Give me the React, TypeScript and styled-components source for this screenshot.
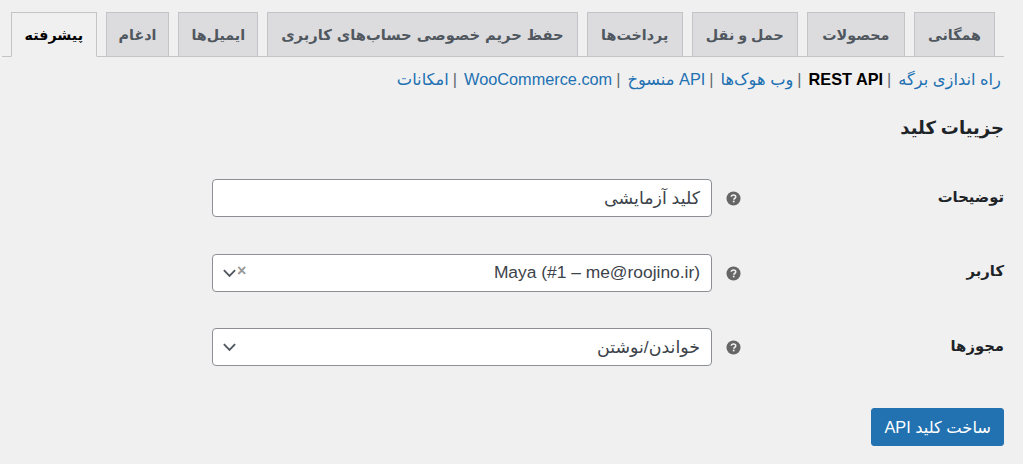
import React from 'react';
import styled, { createGlobalStyle } from 'styled-components';

const GlobalStyle = createGlobalStyle`
  html, body {
    margin: 0;
    height: 100%;
    background: #f0f0f1;
  }
  body {
    font-family: "Liberation Sans", "DejaVu Sans", sans-serif;
    font-size: 14px;
    color: #3c434a;
  }
`;

const tabs = [
  { label: 'همگانی', pad: 13 },
  { label: 'محصولات', pad: 14.5 },
  { label: 'حمل و نقل', pad: 13 },
  { label: 'پرداخت‌ها', pad: 13.5 },
  { label: 'حفظ حریم خصوصی حساب‌های کاربری', pad: 13, spread: true },
  { label: 'ایمیل‌ها', pad: 12 },
  { label: 'ادغام', pad: 12 },
  { label: 'پیشرفته', pad: 12.5, active: true },
];

const subLinks = [
  { label: 'راه اندازی برگه' },
  { label: 'REST API', current: true },
  { label: 'وب هوک‌ها' },
  { label: 'API منسوخ' },
  { label: 'WooCommerce.com' },
  { label: 'امکانات' },
];

const HelpIcon = () => (
  <HelpSvg viewBox="0 0 16 16" aria-hidden="true">
    <circle cx="8" cy="8" r="7.5" fill="#666" />
    <path
      d="M5.6 6.2C5.7 4.9 6.7 4.2 8 4.2c1.4 0 2.4.8 2.4 2 0 1-.6 1.4-1.2 1.8-.6.4-.8.6-.8 1.3"
      fill="none"
      stroke="#f0f0f1"
      strokeWidth="1.7"
    />
    <rect x="7.3" y="10.3" width="1.8" height="1.8" fill="#f0f0f1" />
  </HelpSvg>
);

const Chevron = () => (
  <ChevronSvg viewBox="0 0 16 10" aria-hidden="true">
    <path d="M2 2l6 6 6-6" fill="none" stroke="#50575e" strokeWidth="2" />
  </ChevronSvg>
);

const App = () => {
  return (
    <Page dir="rtl">
      <GlobalStyle />
      <TabBar>
        {tabs.map((tab) => (
          <Tab key={tab.label} $active={tab.active} $pad={tab.pad} $spread={tab.spread}>{tab.label}</Tab>
        ))}
      </TabBar>

      <SubNav>
        {subLinks.map((link, i) => (
          <SubItem key={link.label}>
            {link.current ? <Current>{link.label}</Current> : <SubLink href="#">{link.label}</SubLink>}
            {i < subLinks.length - 1 && <Sep>|</Sep>}
          </SubItem>
        ))}
      </SubNav>

      <Heading>جزییات کلید</Heading>

      <Form>
        <Row>
          <Label>توضیحات</Label>
          <HelpCell><HelpIcon /></HelpCell>
          <Field>
            <FieldText>کلید آزمایشی</FieldText>
          </Field>
        </Row>
        <Row>
          <Label>کاربر</Label>
          <HelpCell><HelpIcon /></HelpCell>
          <Field>
            <FieldText dir="ltr">Maya (#1 – me@roojino.ir)</FieldText>
            <Controls>
              <Clear>×</Clear>
              <Chevron />
            </Controls>
          </Field>
        </Row>
        <Row>
          <Label>مجوزها</Label>
          <HelpCell><HelpIcon /></HelpCell>
          <Field>
            <FieldText>خواندن/نوشتن</FieldText>
            <Controls>
              <Chevron />
            </Controls>
          </Field>
        </Row>
      </Form>

      <Actions>
        <PrimaryButton>ساخت کلید API</PrimaryButton>
      </Actions>
    </Page>
  );
};

const Page = styled.div`
  width: 1023px;
  height: 464px;
  box-sizing: border-box;
  padding: 12px 19px 0 2px;
  overflow: hidden;
`;

const TabBar = styled.nav`
  display: flex;
  gap: 9px;
  height: 44px;
  padding: 0 9px 0 8px;
  border-bottom: 1px solid #c3c4c7;
`;

const Tab = styled.a<{ $active?: boolean; $pad: number; $spread?: boolean }>`
  box-sizing: border-box;
  height: 45px;
  display: flex;
  align-items: center;
  padding: 0 ${(p) => p.$pad}px;
  border: 1px solid #c3c4c7;
  border-bottom-color: ${(p) => (p.$active ? '#f0f0f1' : '#c3c4c7')};
  background: ${(p) => (p.$active ? '#f0f0f1' : '#dcdcde')};
  color: ${(p) => (p.$active ? '#000' : '#50575e')};
  font-size: ${(p) => (p.$spread ? '14.7px' : '14.3px')};
  font-weight: 600;
  white-space: nowrap;
  word-spacing: ${(p) => (p.$spread ? '0.9px' : '0')};
`;

const SubNav = styled.div`
  display: flex;
  margin-top: 12px;
  padding-right: 3px;
  line-height: 20px;
  font-size: 16.3px;
`;

const SubItem = styled.span`
  white-space: nowrap;
`;

const SubLink = styled.a`
  color: #2271b1;
  text-decoration: none;
`;

const Current = styled.strong`
  color: #000;
  font-weight: 600;
`;

const Sep = styled.span`
  color: #646970;
  margin-inline: 7px 4px;
`;

const Heading = styled.h2`
  margin: 27px 0 0;
  font-size: 18px;
  line-height: 24px;
  font-weight: 600;
  color: #1d2327;
`;

const Form = styled.div`
  display: flex;
  flex-direction: column;
  gap: 36.5px;
  margin-top: 39px;
`;

const Row = styled.div`
  display: grid;
  grid-template-columns: 263px 29px 500px;
  align-items: center;
  height: 38px;
`;

const Label = styled.div`
  font-size: 14.8px;
  font-weight: 600;
  color: #1d2327;
  margin-bottom: 4px;
`;

const HelpCell = styled.div`
  display: flex;
  justify-content: flex-start;
  padding-top: 1px;
`;

const HelpSvg = styled.svg`
  width: 15px;
  height: 15px;
`;

const Field = styled.div`
  box-sizing: border-box;
  height: 38px;
  width: 500px;
  display: flex;
  align-items: center;
  justify-content: space-between;
  padding: 0 11px 0 9px;
  background: #fff;
  border: 1px solid #8c8f94;
  border-radius: 4px;
  font-size: 17.4px;
  color: #3c434a;
`;

const FieldText = styled.span`
  white-space: nowrap;
`;

const Controls = styled.span`
  display: flex;
  align-items: center;
  direction: rtl;
`;

const Clear = styled.span`
  color: #999;
  font-size: 16px;
  font-weight: 700;
  line-height: 16px;
  margin-bottom: 3px;
`;

const ChevronSvg = styled.svg`
  width: 15px;
  height: 10px;
`;

const Actions = styled.div`
  margin-top: 42px;
`;

const PrimaryButton = styled.button`
  box-sizing: border-box;
  height: 38px;
  padding: 0 12px;
  background: #2271b1;
  border: 1px solid #2271b1;
  border-radius: 3px;
  color: #fff;
  font-family: inherit;
  font-size: 16.3px;
`;

export default App;
